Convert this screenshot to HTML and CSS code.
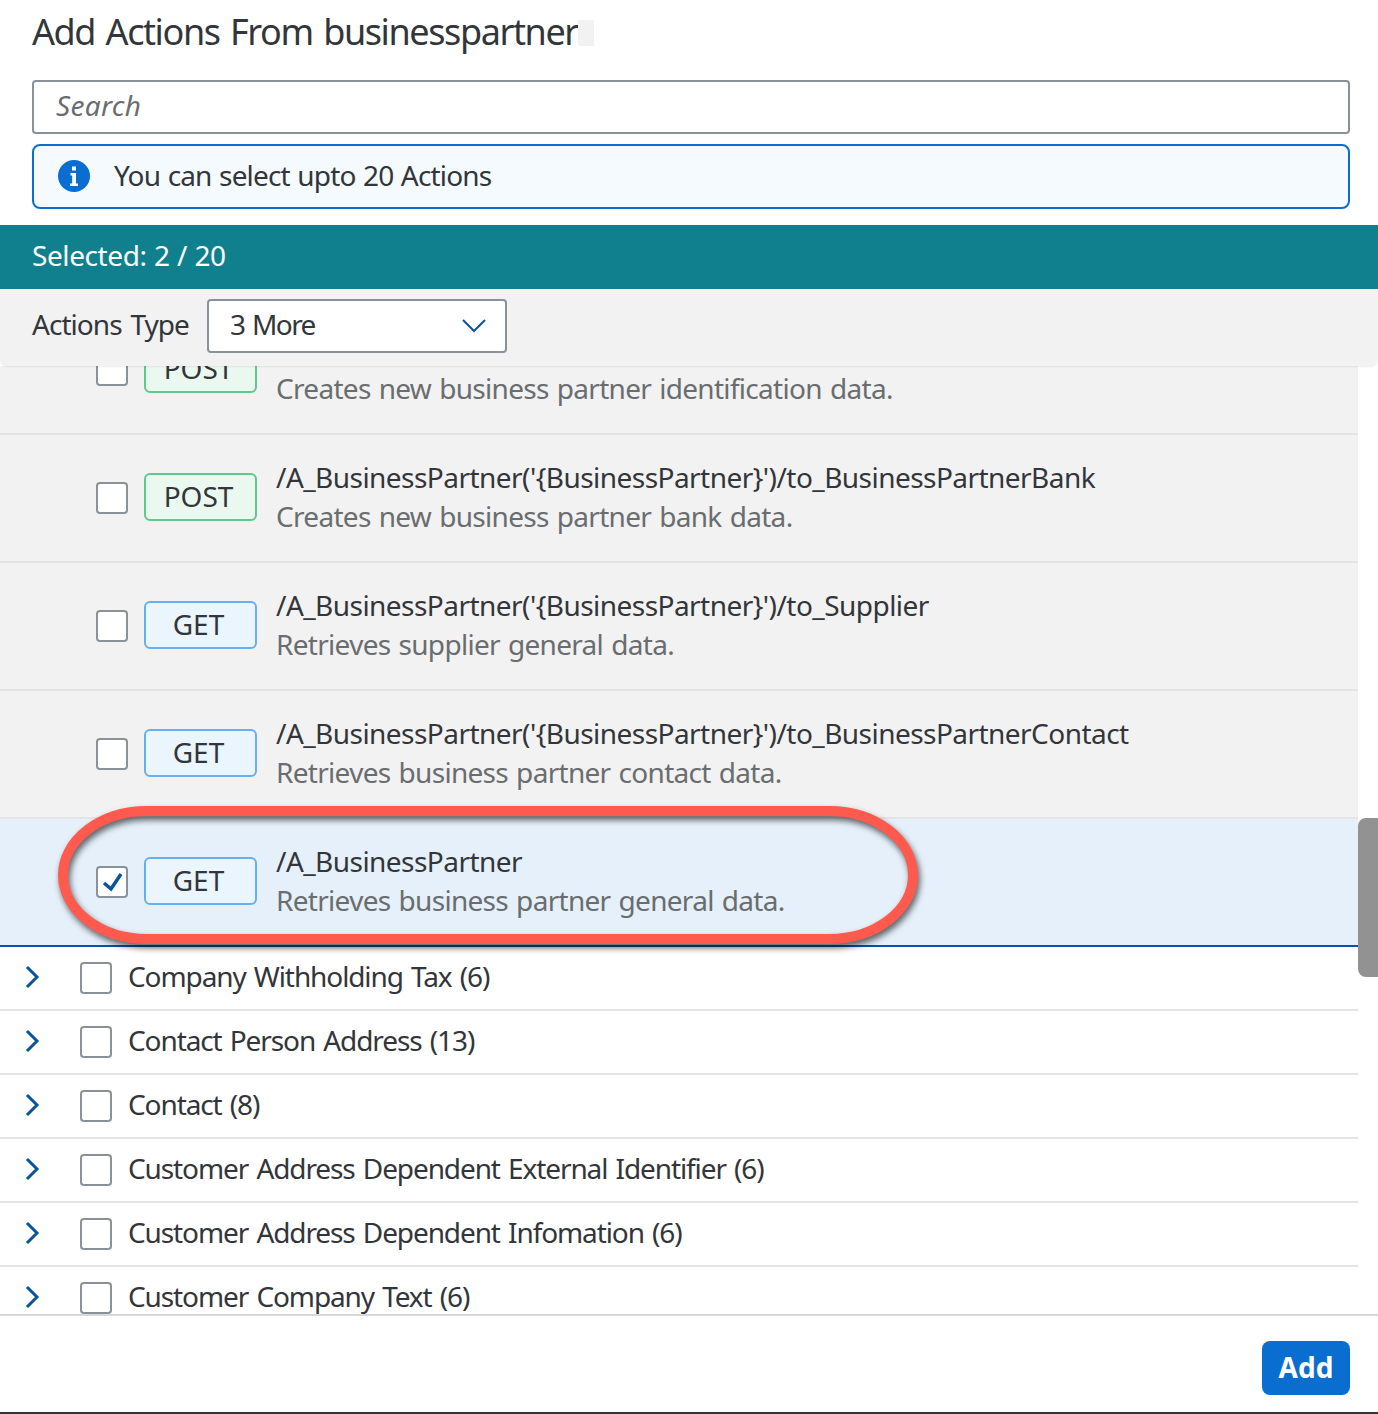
FILE: index.html
```html
<!DOCTYPE html>
<html lang="en">

<head>
    <meta charset="UTF-8">
    <meta name="viewport" content="width=device-width, initial-scale=1.0">
    <title>Add Actions</title>
    <link rel="stylesheet" href="styles.css">
</head>

<body>
    <div class="dialog">
        <header class="dialog-head">
            <h1 class="dialog-title">Add Actions From businesspartners<span class="redact"></span></h1>
            <input class="search" type="text" placeholder="Search">
            <div class="info-strip">
                <svg class="info-icon" viewBox="0 0 32 32">
                    <circle cx="16" cy="16" r="16" fill="#0a6ed1"></circle>
                    <path d="M14 6.500h4v4h-4z M12.500 13h5.500v10.500h2V26h-8v-2.500h2.200v-8H12.500z" fill="#fff"></path>
                </svg>
                <span class="info-text">You can select upto 20 Actions</span>
            </div>
        </header>

        <div class="selected-bar">Selected: 2 / 20</div>

        <div class="filter-bar">
            <label class="filter-label">Actions Type</label>
            <div class="select">
                <span class="select-value">3 More</span>
                <svg class="select-arrow" viewBox="0 0 26 16">
                    <path d="M2 2l11 11L24 2" fill="none" stroke="#0854a0" stroke-width="2"></path>
                </svg>
            </div>
        </div>

        <div class="list-wrap">
            <div class="list">
                <div class="action-row first-row">
                    <span class="checkbox"></span>
                    <span class="tag tag-post">POST</span>
                    <div class="action-text">
                        <div class="action-path">&nbsp;</div>
                        <div class="action-desc">Creates new business partner identification data.</div>
                    </div>
                </div>
                <div class="action-row">
                    <span class="checkbox"></span>
                    <span class="tag tag-post">POST</span>
                    <div class="action-text">
                        <div class="action-path">/A_BusinessPartner('{BusinessPartner}')/to_BusinessPartnerBank</div>
                        <div class="action-desc">Creates new business partner bank data.</div>
                    </div>
                </div>
                <div class="action-row">
                    <span class="checkbox"></span>
                    <span class="tag tag-get">GET</span>
                    <div class="action-text">
                        <div class="action-path">/A_BusinessPartner('{BusinessPartner}')/to_Supplier</div>
                        <div class="action-desc">Retrieves supplier general data.</div>
                    </div>
                </div>
                <div class="action-row">
                    <span class="checkbox"></span>
                    <span class="tag tag-get">GET</span>
                    <div class="action-text">
                        <div class="action-path">/A_BusinessPartner('{BusinessPartner}')/to_BusinessPartnerContact</div>
                        <div class="action-desc">Retrieves business partner contact data.</div>
                    </div>
                </div>
                <div class="action-row selected">
                    <span class="checkbox">
                        <svg viewBox="0 0 28 28">
                            <path d="M6 15l7 6L23 6" fill="none" stroke="#0854a0" stroke-width="3.500"></path>
                        </svg>
                    </span>
                    <span class="tag tag-get">GET</span>
                    <div class="action-text">
                        <div class="action-path">/A_BusinessPartner</div>
                        <div class="action-desc">Retrieves business partner general data.</div>
                    </div>
                </div>

                <div class="group-row">
                    <svg class="chevron" viewBox="0 0 16 24"><path d="M3 2l10 10L3 22" fill="none" stroke="#0854a0" stroke-width="3"></path></svg>
                    <span class="checkbox"></span>
                    <span class="group-label">Company Withholding Tax (6)</span>
                </div>
                <div class="group-row">
                    <svg class="chevron" viewBox="0 0 16 24"><path d="M3 2l10 10L3 22" fill="none" stroke="#0854a0" stroke-width="3"></path></svg>
                    <span class="checkbox"></span>
                    <span class="group-label">Contact Person Address (13)</span>
                </div>
                <div class="group-row">
                    <svg class="chevron" viewBox="0 0 16 24"><path d="M3 2l10 10L3 22" fill="none" stroke="#0854a0" stroke-width="3"></path></svg>
                    <span class="checkbox"></span>
                    <span class="group-label">Contact (8)</span>
                </div>
                <div class="group-row">
                    <svg class="chevron" viewBox="0 0 16 24"><path d="M3 2l10 10L3 22" fill="none" stroke="#0854a0" stroke-width="3"></path></svg>
                    <span class="checkbox"></span>
                    <span class="group-label">Customer Address Dependent External Identifier (6)</span>
                </div>
                <div class="group-row">
                    <svg class="chevron" viewBox="0 0 16 24"><path d="M3 2l10 10L3 22" fill="none" stroke="#0854a0" stroke-width="3"></path></svg>
                    <span class="checkbox"></span>
                    <span class="group-label">Customer Address Dependent Infomation (6)</span>
                </div>
                <div class="group-row">
                    <svg class="chevron" viewBox="0 0 16 24"><path d="M3 2l10 10L3 22" fill="none" stroke="#0854a0" stroke-width="3"></path></svg>
                    <span class="checkbox"></span>
                    <span class="group-label">Customer Company Text (6)</span>
                </div>
            </div>
            <div class="scroll-thumb"></div>
            <svg class="callout" viewBox="0 0 880 160">
                <rect x="5" y="5" width="850" height="128" rx="84" ry="64" fill="none" stroke="#ff5a4d" stroke-width="10"></rect>
            </svg>
        </div>

        <footer class="dialog-foot">
            <button class="add-btn">Add</button>
        </footer>
    </div>
</body>

</html>
```

FILE: styles.css
```css
html,
body {
    margin: 0;
    padding: 0;
    background-color: #fff;
}

body {
    font-family: "Noto Sans", Arial, sans-serif;
    font-size: 28px;
    color: #32363a;
    overflow: hidden;
}

.dialog {
    width: 1378px;
    height: 1414px;
    display: flex;
    flex-direction: column;
    box-sizing: border-box;
    border-bottom: 2px solid #333;
}

.dialog-head {
    height: 225px;
    flex: none;
    box-sizing: border-box;
    padding: 0 28px 0 32px;
}

.dialog-title {
    position: relative;
    display: inline-block;
    margin: 0;
    height: 80px;
    line-height: 64px;
    font-size: 36px;
    font-weight: 400;
    letter-spacing: -1.4px;
    word-spacing: 2.500px;
}

.redact {
    position: absolute;
    top: 20px;
    right: 0;
    width: 16px;
    height: 26px;
    background-color: #f2f2f2;
}

.search {
    display: block;
    width: 100%;
    height: 54px;
    box-sizing: border-box;
    border: 2px solid #89919a;
    border-radius: 4px;
    padding: 0 22px 4px;
    font-family: inherit;
    font-size: 28px;
    font-style: italic;
    letter-spacing: 0.3px;
}

.search::placeholder {
    color: #6a6d70;
    opacity: 1;
}

.info-strip {
    display: flex;
    align-items: center;
    gap: 24px;
    height: 65px;
    margin-top: 10px;
    box-sizing: border-box;
    padding: 0 24px;
    background-color: #f5faff;
    border: 2px solid #0a6ed1;
    border-radius: 8px;
}

.info-icon {
    width: 32px;
    height: 32px;
    margin-bottom: 1px;
}

.info-text {
    margin-bottom: 4px;
    letter-spacing: -0.85px;
    word-spacing: 1.100px;
}

.selected-bar {
    flex: none;
    height: 64px;
    line-height: 60px;
    padding-left: 32px;
    background-color: #10808f;
    color: #fff;
    letter-spacing: -0.4px;
    word-spacing: 0.5px;
}

.filter-bar {
    position: relative;
    z-index: 2;
    flex: none;
    display: flex;
    align-items: center;
    gap: 18px;
    height: 77px;
    box-sizing: border-box;
    padding: 0 32px 4px;
    background-color: #f2f2f2;
    border-radius: 0 0 8px 8px;
    box-shadow: 0 1px 2px rgba(0, 0, 0, 0.08);
}

.filter-label {
    margin-bottom: 4px;
    letter-spacing: -0.95px;
    word-spacing: 2.400px;
}

.select {
    display: flex;
    align-items: center;
    justify-content: space-between;
    width: 300px;
    height: 54px;
    box-sizing: border-box;
    padding: 0 18px 0 21px;
    background-color: #fff;
    border: 2px solid #89919a;
    border-radius: 4px;
}

.select-value {
    margin-bottom: 4px;
    letter-spacing: -1.6px;
    word-spacing: 2px;
}

.select-arrow {
    width: 26px;
    height: 16px;
}

.list-wrap {
    position: relative;
    flex: 1;
    overflow: hidden;
}

.list {
    width: 1358px;
}

.action-row {
    display: flex;
    align-items: center;
    height: 128px;
    box-sizing: border-box;
    padding-left: 96px;
    background-color: #f2f2f2;
    border-bottom: 2px solid #e4e4e4;
}

.first-row {
    margin-top: -59px;
}

.action-row.selected {
    background-color: #e5f0fa;
    border-bottom-color: #0854a0;
}

.checkbox {
    flex: none;
    display: block;
    width: 32px;
    height: 32px;
    box-sizing: border-box;
    background-color: #fff;
    border: 2px solid #89919a;
    border-radius: 4px;
}

.checkbox svg {
    display: block;
}

.tag {
    flex: none;
    width: 113px;
    height: 48px;
    line-height: 42px;
    margin: 0 19px 2px 16px;
    padding-right: 4px;
    box-sizing: border-box;
    text-align: center;
    border-radius: 6px;
    border: 2px solid;
}

.tag-post {
    background-color: #ebf8f0;
    border-color: #5dc98c;
}

.tag-get {
    background-color: #ebf5fe;
    border-color: #64b0f5;
}

.action-text {
    margin-bottom: 2px;
    line-height: 39px;
    white-space: nowrap;
}

.action-path {
    letter-spacing: -0.54px;
}

.action-desc {
    color: #6a6d70;
    letter-spacing: -0.7px;
    word-spacing: 1.500px;
}

.group-row {
    display: flex;
    align-items: center;
    height: 64px;
    box-sizing: border-box;
    background-color: #fff;
    border-bottom: 2px solid #e4e4e4;
    padding-left: 24px;
}

.chevron {
    flex: none;
    width: 16px;
    height: 24px;
    margin-right: 40px;
    margin-bottom: 2px;
}

.group-row .checkbox {
    margin-right: 16px;
}

.group-label {
    margin-bottom: 4px;
    letter-spacing: -1.1px;
    word-spacing: 2px;
}

.scroll-thumb {
    position: absolute;
    top: 452px;
    right: 0;
    width: 20px;
    height: 159px;
    background-color: #929292;
    border-radius: 8px 0 0 8px;
}

.callout {
    position: absolute;
    top: 440px;
    left: 58px;
    width: 880px;
    height: 160px;
    filter: drop-shadow(2px 4px 3px rgba(0, 0, 0, 0.6));
}

.dialog-foot {
    flex: none;
    display: flex;
    justify-content: flex-end;
    align-items: center;
    height: 98px;
    box-sizing: border-box;
    padding: 8px 28px 0 0;
    border-top: 2px solid #d9d9d9;
}

.add-btn {
    width: 88px;
    height: 54px;
    padding: 0 0 2px;
    border: none;
    border-radius: 8px;
    background-color: #0a6ed1;
    color: #fff;
    font-family: inherit;
    font-size: 28px;
    font-weight: 700;
}
```
